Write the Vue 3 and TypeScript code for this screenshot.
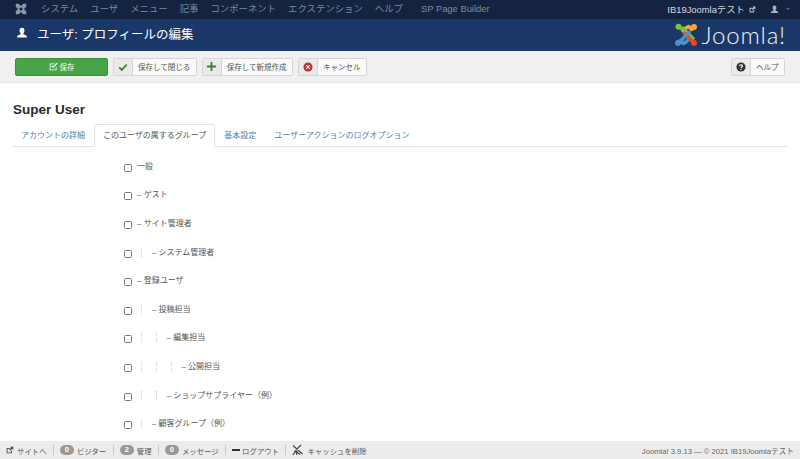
<script setup lang="ts">
interface Group { label: string; depth: number; prefix: boolean }
const groups: Group[] = [
  { label: '一般', depth: 0, prefix: false },
  { label: 'ゲスト', depth: 0, prefix: true },
  { label: 'サイト管理者', depth: 0, prefix: true },
  { label: 'システム管理者', depth: 1, prefix: true },
  { label: '登録ユーザ', depth: 0, prefix: true },
  { label: '投稿担当', depth: 1, prefix: true },
  { label: '編集担当', depth: 2, prefix: true },
  { label: '公開担当', depth: 3, prefix: true },
  { label: 'ショップサプライヤー（例）', depth: 2, prefix: true },
  { label: '顧客グループ（例）', depth: 1, prefix: true },
]
const menu = ['システム', 'ユーザ', 'メニュー', '記事', 'コンポーネント', 'エクステンション', 'ヘルプ', 'SP Page Builder']
const tabs = ['アカウントの詳細', 'このユーザの属するグループ', '基本設定', 'ユーザーアクションのログオプション']
</script>

<template>
  <div class="page">
    <nav class="navbar">
      <svg class="nav-logo" viewBox="0 0 16 16" width="12" height="12">
        <path d="M1 1h4l3 3 3-3h4v4l-3 3 3 3v4h-4l-3-3-3 3H1v-4l3-3-3-3z" fill="#8d97a8" />
        <path d="M8 5.500 10.500 8 8 10.500 5.500 8z" fill="#14233f" />
      </svg>
      <ul class="menu">
        <li v-for="m in menu" :key="m">{{ m }}</li>
      </ul>
      <div class="nav-right">
        <span class="site">IB19Joomlaテスト</span>
        <svg class="ext" viewBox="0 0 12 12" width="7" height="7">
          <path d="M1 3h5v1.500H2.500v5h5V7H9v4H1zM6 1h5v5L9.200 4.300 6.500 7 5 5.500 7.700 2.800z" fill="#c5cad3" />
        </svg>
        <svg class="user-small" viewBox="0 0 16 16" width="9" height="9">
          <path d="M8 1c2.200 0 3.300 1.600 3.300 3.700 0 1.500-.6 2.900-1.500 3.600v1.300c2 .6 4.700 1.400 4.700 3.400v1H1.500v-1c0-2 2.700-2.800 4.700-3.400V8.300C5.300 7.600 4.700 6.200 4.700 4.700 4.700 2.600 5.800 1 8 1z" fill="#aab2c0" />
        </svg>
        <span class="caret"></span>
      </div>
    </nav>

    <header class="header">
      <svg class="title-icon" viewBox="0 0 16 16" width="12" height="12">
        <path d="M8 1c2.200 0 3.300 1.600 3.300 3.700 0 1.500-.6 2.900-1.500 3.600v1.300c2 .6 4.700 1.400 4.700 3.400v1H1.500v-1c0-2 2.700-2.800 4.700-3.400V8.300C5.300 7.600 4.700 6.200 4.700 4.700 4.700 2.600 5.800 1 8 1z" fill="#fff" />
      </svg>
      <h1>ユーザ: プロフィールの編集</h1>
      <div class="brand">
        <svg viewBox="0 0 24 24" width="24" height="24" class="brand-mark">
          <g fill="none" stroke-width="3.600" stroke-linejoin="round">
            <path d="M8 9 12 5l2.500-1.500 3 2.500L18 8" stroke="#f9a541" />
            <path d="M20 16.500 16 12.500 11 7.500 8.500 5 6 5.500" stroke="#7ac143" />
            <path d="M16 15l-4 4-2.500 1.500L6.500 18 6 16" stroke="#5091cd" />
            <path d="M9.500 9.500 14 14l3.500 3.500-1 1.500" stroke="#f44321" />
            <path d="M16 8.500 11.500 13 7 17.500" stroke="#5091cd" />
          </g>
          <circle cx="4.500" cy="3.800" r="3" fill="#7ac143" />
          <circle cx="20" cy="4" r="3" fill="#f9a541" />
          <circle cx="4" cy="20" r="3" fill="#5091cd" />
          <circle cx="20" cy="20" r="3" fill="#f44321" />
        </svg>
        <span class="brand-text">Joomla!</span>
      </div>
    </header>

    <div class="toolbar">
      <button class="btn-save">
        <svg viewBox="0 0 12 12" width="9" height="9">
          <path d="M1 2h7L7 3H2v7h7V7l1-1v5H1z" fill="#fff" />
          <path d="M3.500 5 5.500 7 11 1.500" fill="none" stroke="#fff" stroke-width="1.500" />
        </svg>
        <span>保存</span>
      </button>
      <button class="btn">
        <span class="btn-icon">
          <svg viewBox="0 0 12 12" width="10" height="10"><path d="M1.500 6.500 4.500 9.500 10.500 3" fill="none" stroke="#378137" stroke-width="2.200" /></svg>
        </span>
        <span class="btn-text">保存して閉じる</span>
      </button>
      <button class="btn">
        <span class="btn-icon">
          <svg viewBox="0 0 12 12" width="11" height="11"><path d="M5 1h2v4h4v2H7v4H5V7H1V5h4z" fill="#378137" /></svg>
        </span>
        <span class="btn-text">保存して新規作成</span>
      </button>
      <button class="btn">
        <span class="btn-icon">
          <svg viewBox="0 0 12 12" width="10" height="10">
            <circle cx="6" cy="6" r="5.500" fill="#bd362f" />
            <path d="M4 4l4 4M8 4l-4 4" stroke="#fff" stroke-width="1.500" />
          </svg>
        </span>
        <span class="btn-text">キャンセル</span>
      </button>
      <button class="btn help">
        <span class="btn-icon">
          <svg viewBox="0 0 12 12" width="10" height="10">
            <circle cx="6" cy="6" r="5.500" fill="#333" />
            <path d="M4.300 4.700C4.300 3 7.800 3 7.800 4.800 7.800 6 6 6 6 7.300" fill="none" stroke="#fff" stroke-width="1.300" />
            <rect x="5.300" y="8.100" width="1.400" height="1.400" fill="#fff" />
          </svg>
        </span>
        <span class="btn-text">ヘルプ</span>
      </button>
    </div>

    <main class="content">
      <h2>Super User</h2>
      <ul class="tabs">
        <li v-for="(t, i) in tabs" :key="t" :class="{ active: i === 1 }">{{ t }}</li>
      </ul>
      <div class="groups">
        <label v-for="g in groups" :key="g.label" class="group">
          <input type="checkbox" />
          <span v-for="n in g.depth" :key="n" class="indent"></span>
          <span class="glabel"><template v-if="g.prefix">– </template>{{ g.label }}</span>
        </label>
      </div>
    </main>

    <footer class="status">
      <svg class="s-icon" viewBox="0 0 12 12" width="8" height="8">
        <path d="M1 3h5v1.300H2.300v5.400h5.400V7H9v4H1zM6 1h5v5L9.200 4.300 6.500 7 5 5.500 7.700 2.800z" fill="#444" />
      </svg>
      <span class="s-item">サイトへ</span>
      <span class="sep"></span>
      <span class="badge">0</span><span class="s-item">ビジター</span>
      <span class="sep"></span>
      <span class="badge">2</span><span class="s-item">管理</span>
      <span class="sep"></span>
      <span class="badge">0</span><span class="s-item">メッセージ</span>
      <span class="sep"></span>
      <span class="minus"></span><span class="s-item">ログアウト</span>
      <span class="sep"></span>
      <svg class="s-icon broom" viewBox="0 0 12 12" width="12" height="12">
        <path d="M1 1.500 10.500 10M9 1 3.500 6.500M3.500 6.500 1 11M3.500 6.500 5 11M3.500 6.500 8 10.500" fill="none" stroke="#444" stroke-width="1.100" />
      </svg>
      <span class="s-item">キャッシュを削除</span>
      <span class="copy">Joomla! 3.9.13 — © 2021 IB19Joomlaテスト</span>
    </footer>
  </div>
</template>

<style>
html, body { margin: 0; overflow: hidden; background: #fff; }
</style>

<style scoped>
.page {
  width: 800px;
  height: 459px;
  display: flex;
  flex-direction: column;
  overflow: hidden;
  font-family: "Liberation Sans", "Noto Sans CJK JP", sans-serif;
  font-size: 8px;
  color: #333;
  position: relative;
}
.navbar {
  height: 19px;
  flex: none;
  box-sizing: border-box;
  background: #14233f;
  display: flex;
  align-items: center;
  padding: 0 10px 1px 15px;
  color: #7f8a9c;
}
.nav-logo { flex: none; }
.menu {
  display: flex;
  list-style: none;
  margin: 0 0 0 14px;
  padding: 0;
  gap: 12px;
  font-size: 9.400px;
  line-height: 14px;
}
.menu li:last-child { margin-left: 6px; }
.nav-right {
  margin-left: auto;
  display: flex;
  align-items: center;
  color: #d5d9e0;
  font-size: 9.400px;
}
.ext { margin-left: 4px; }
.user-small { margin-left: 14px; }
.caret {
  width: 0;
  height: 0;
  margin-left: 7px;
  border: 2.500px solid transparent;
  border-top-color: #5d6a80;
  border-bottom: 0;
}
.header {
  height: 32px;
  flex: none;
  box-sizing: border-box;
  background: #1a3867;
  display: flex;
  align-items: center;
  padding: 0 14px 4px 16px;
  color: #fff;
}
.title-icon { flex: none; }
h1 {
  font-weight: 400;
  font-size: 12.500px;
  margin: 0 0 0 9px;
}
.brand {
  margin-left: auto;
  display: flex;
  align-items: center;
  margin-top: 4px;
}
.brand-text {
  font-family: Lato, sans-serif;
  font-weight: 300;
  font-size: 24px;
  line-height: 24px;
  margin-left: 4px;
  letter-spacing: 0.8px;
  color: #eef2f8;
}
.toolbar {
  height: 32px;
  flex: none;
  box-sizing: border-box;
  background: #f0f0f0;
  border-bottom: 1px solid #e3e3e3;
  display: flex;
  align-items: center;
  padding: 0 15px;
  gap: 5px;
}
button {
  font: inherit;
  font-size: 7.500px;
  padding: 0;
  height: 18px;
  cursor: pointer;
}
.btn-save {
  width: 93px;
  background: #46a546;
  border: 1px solid #3d8f3d;
  border-radius: 2px;
  color: #fff;
  display: flex;
  align-items: center;
  justify-content: center;
  gap: 2px;
}
.btn {
  display: flex;
  align-items: stretch;
  background: #fafafa;
  border: 1px solid #d5d5d5;
  border-radius: 2px;
  color: #555;
}
.btn-icon {
  width: 18px;
  background: #eaeaea;
  border-right: 1px solid #d5d5d5;
  display: flex;
  align-items: center;
  justify-content: center;
}
.btn-text {
  padding: 0 5.500px 0 5px;
  align-self: center;
}
.help { margin-left: auto; }
.content {
  flex: 1;
  min-height: 0;
  padding: 0 12px;
  overflow: hidden;
}
h2 {
  margin: 18px 0 0 1px;
  font-size: 13.500px;
  line-height: 18px;
  font-weight: 700;
  color: #2b2b2b;
}
.tabs {
  list-style: none;
  display: flex;
  margin: 5px 0 0;
  padding: 0;
  border-bottom: 1px solid #e3e3e3;
  height: 22px;
  color: #4f7fb0;
}
.tabs li {
  padding: 0 8px;
  line-height: 22px;
  height: 22px;
  border: 1px solid transparent;
  border-bottom: 0;
  box-sizing: content-box;
}
.tabs li.active {
  color: #555;
  background: #fff;
  border-color: #e3e3e3;
  border-radius: 3px 3px 0 0;
}
.groups {
  margin: 5px 0 0 112px;
  display: flex;
  flex-direction: column;
}
.group {
  height: 28.600px;
  display: flex;
  align-items: center;
  color: #555;
}
.group input {
  appearance: none;
  width: 8px;
  height: 8px;
  margin: 3px 5px 0 0;
  flex: none;
  box-sizing: border-box;
  border: 1px solid #767676;
  border-radius: 1.500px;
  background: #fff;
}
.glabel { margin-top: -2px; }
.indent {
  width: 10.800px;
  height: 9px;
  flex: none;
  box-sizing: border-box;
  border-left: 1px dotted #ccc;
  margin-left: 4px;
}
.status {
  position: absolute;
  left: 0;
  right: 0;
  bottom: 0;
  height: 18px;
  background: #ececec;
  display: flex;
  align-items: center;
  padding: 0 6px;
  font-size: 7.400px;
  color: #555;
}
.s-icon { flex: none; margin-right: 3px; }
.sep {
  width: 1px;
  height: 10px;
  background: #c8c8c8;
  margin: 0 6.200px;
  flex: none;
}
.badge {
  background: #999;
  color: #fff;
  border-radius: 6px;
  width: 14px;
  height: 10px;
  line-height: 10px;
  text-align: center;
  font-size: 7.500px;
  font-weight: 700;
  margin-right: 3px;
  flex: none;
}
.minus {
  width: 8px;
  height: 2px;
  background: #333;
  margin-right: 2px;
}
.copy {
  margin-left: auto;
  font-size: 7.650px;
  color: #666;
}
</style>
